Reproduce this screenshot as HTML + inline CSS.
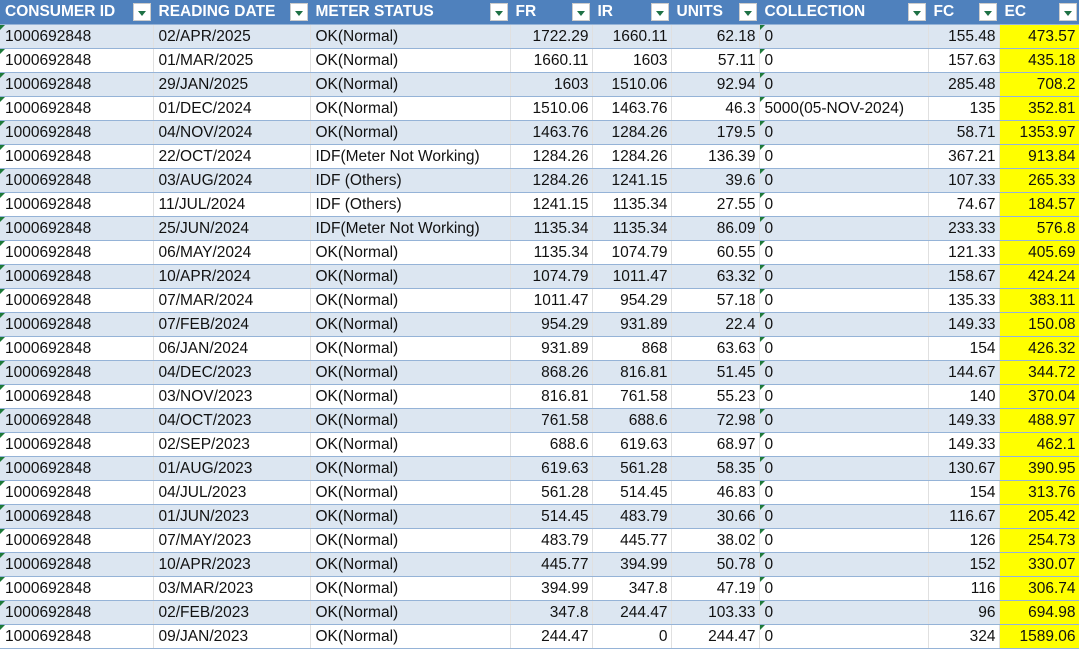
<!DOCTYPE html>
<html><head><style>
body{margin:0;width:1079px;height:650px;overflow:hidden;background:#fff;font-family:"Liberation Sans",sans-serif;}
table{border-collapse:collapse;table-layout:fixed;width:1079px;}
td,th{height:23px;padding:0 4px 0 5px;font-size:15.5px;white-space:nowrap;overflow:hidden;border-bottom:1px solid #95b3d7;border-right:1px solid #e0e0e0;position:relative;color:#111;}
td.r,td.y{padding-right:3px;}
th{height:24px;background:#4f81bd;color:#fff;text-align:left;font-weight:bold;font-size:15.5px;border-right:1px solid #4f81bd;border-bottom:1px solid #95b3d7;}
th span{position:absolute;right:2px;top:3px;width:18px;height:18px;background:#fff;border:1px solid #ccc;box-sizing:border-box;}
th span:after{content:"";position:absolute;left:4px;top:7px;border-left:4px solid transparent;border-right:4px solid transparent;border-top:5px solid #1e7145;}
tr:nth-child(even) td{background:#dce6f1;}
td.r{text-align:right;}
td.y{background:#ffff00 !important;text-align:right;}
td.t:before{content:"";position:absolute;left:0;top:0;border-top:5px solid #1e7a3a;border-right:5px solid transparent;}
</style></head><body>
<table>
<colgroup><col style="width:153px"><col style="width:157px"><col style="width:200px"><col style="width:82px"><col style="width:79px"><col style="width:88px"><col style="width:169px"><col style="width:71px"><col style="width:80px"></colgroup>
<tr><th>CONSUMER ID<span></span></th><th>READING DATE<span></span></th><th>METER STATUS<span></span></th><th>FR<span></span></th><th>IR<span></span></th><th>UNITS<span></span></th><th>COLLECTION<span></span></th><th>FC<span></span></th><th>EC<span></span></th></tr>
<tr><td class="t">1000692848</td><td>02/APR/2025</td><td>OK(Normal)</td><td class="r">1722.29</td><td class="r">1660.11</td><td class="r">62.18</td><td class="t">0</td><td class="r">155.48</td><td class="y">473.57</td></tr>
<tr><td class="t">1000692848</td><td>01/MAR/2025</td><td>OK(Normal)</td><td class="r">1660.11</td><td class="r">1603</td><td class="r">57.11</td><td class="t">0</td><td class="r">157.63</td><td class="y">435.18</td></tr>
<tr><td class="t">1000692848</td><td>29/JAN/2025</td><td>OK(Normal)</td><td class="r">1603</td><td class="r">1510.06</td><td class="r">92.94</td><td class="t">0</td><td class="r">285.48</td><td class="y">708.2</td></tr>
<tr><td class="t">1000692848</td><td>01/DEC/2024</td><td>OK(Normal)</td><td class="r">1510.06</td><td class="r">1463.76</td><td class="r">46.3</td><td class="t">5000(05-NOV-2024)</td><td class="r">135</td><td class="y">352.81</td></tr>
<tr><td class="t">1000692848</td><td>04/NOV/2024</td><td>OK(Normal)</td><td class="r">1463.76</td><td class="r">1284.26</td><td class="r">179.5</td><td class="t">0</td><td class="r">58.71</td><td class="y">1353.97</td></tr>
<tr><td class="t">1000692848</td><td>22/OCT/2024</td><td>IDF(Meter Not Working)</td><td class="r">1284.26</td><td class="r">1284.26</td><td class="r">136.39</td><td class="t">0</td><td class="r">367.21</td><td class="y">913.84</td></tr>
<tr><td class="t">1000692848</td><td>03/AUG/2024</td><td>IDF (Others)</td><td class="r">1284.26</td><td class="r">1241.15</td><td class="r">39.6</td><td class="t">0</td><td class="r">107.33</td><td class="y">265.33</td></tr>
<tr><td class="t">1000692848</td><td>11/JUL/2024</td><td>IDF (Others)</td><td class="r">1241.15</td><td class="r">1135.34</td><td class="r">27.55</td><td class="t">0</td><td class="r">74.67</td><td class="y">184.57</td></tr>
<tr><td class="t">1000692848</td><td>25/JUN/2024</td><td>IDF(Meter Not Working)</td><td class="r">1135.34</td><td class="r">1135.34</td><td class="r">86.09</td><td class="t">0</td><td class="r">233.33</td><td class="y">576.8</td></tr>
<tr><td class="t">1000692848</td><td>06/MAY/2024</td><td>OK(Normal)</td><td class="r">1135.34</td><td class="r">1074.79</td><td class="r">60.55</td><td class="t">0</td><td class="r">121.33</td><td class="y">405.69</td></tr>
<tr><td class="t">1000692848</td><td>10/APR/2024</td><td>OK(Normal)</td><td class="r">1074.79</td><td class="r">1011.47</td><td class="r">63.32</td><td class="t">0</td><td class="r">158.67</td><td class="y">424.24</td></tr>
<tr><td class="t">1000692848</td><td>07/MAR/2024</td><td>OK(Normal)</td><td class="r">1011.47</td><td class="r">954.29</td><td class="r">57.18</td><td class="t">0</td><td class="r">135.33</td><td class="y">383.11</td></tr>
<tr><td class="t">1000692848</td><td>07/FEB/2024</td><td>OK(Normal)</td><td class="r">954.29</td><td class="r">931.89</td><td class="r">22.4</td><td class="t">0</td><td class="r">149.33</td><td class="y">150.08</td></tr>
<tr><td class="t">1000692848</td><td>06/JAN/2024</td><td>OK(Normal)</td><td class="r">931.89</td><td class="r">868</td><td class="r">63.63</td><td class="t">0</td><td class="r">154</td><td class="y">426.32</td></tr>
<tr><td class="t">1000692848</td><td>04/DEC/2023</td><td>OK(Normal)</td><td class="r">868.26</td><td class="r">816.81</td><td class="r">51.45</td><td class="t">0</td><td class="r">144.67</td><td class="y">344.72</td></tr>
<tr><td class="t">1000692848</td><td>03/NOV/2023</td><td>OK(Normal)</td><td class="r">816.81</td><td class="r">761.58</td><td class="r">55.23</td><td class="t">0</td><td class="r">140</td><td class="y">370.04</td></tr>
<tr><td class="t">1000692848</td><td>04/OCT/2023</td><td>OK(Normal)</td><td class="r">761.58</td><td class="r">688.6</td><td class="r">72.98</td><td class="t">0</td><td class="r">149.33</td><td class="y">488.97</td></tr>
<tr><td class="t">1000692848</td><td>02/SEP/2023</td><td>OK(Normal)</td><td class="r">688.6</td><td class="r">619.63</td><td class="r">68.97</td><td class="t">0</td><td class="r">149.33</td><td class="y">462.1</td></tr>
<tr><td class="t">1000692848</td><td>01/AUG/2023</td><td>OK(Normal)</td><td class="r">619.63</td><td class="r">561.28</td><td class="r">58.35</td><td class="t">0</td><td class="r">130.67</td><td class="y">390.95</td></tr>
<tr><td class="t">1000692848</td><td>04/JUL/2023</td><td>OK(Normal)</td><td class="r">561.28</td><td class="r">514.45</td><td class="r">46.83</td><td class="t">0</td><td class="r">154</td><td class="y">313.76</td></tr>
<tr><td class="t">1000692848</td><td>01/JUN/2023</td><td>OK(Normal)</td><td class="r">514.45</td><td class="r">483.79</td><td class="r">30.66</td><td class="t">0</td><td class="r">116.67</td><td class="y">205.42</td></tr>
<tr><td class="t">1000692848</td><td>07/MAY/2023</td><td>OK(Normal)</td><td class="r">483.79</td><td class="r">445.77</td><td class="r">38.02</td><td class="t">0</td><td class="r">126</td><td class="y">254.73</td></tr>
<tr><td class="t">1000692848</td><td>10/APR/2023</td><td>OK(Normal)</td><td class="r">445.77</td><td class="r">394.99</td><td class="r">50.78</td><td class="t">0</td><td class="r">152</td><td class="y">330.07</td></tr>
<tr><td class="t">1000692848</td><td>03/MAR/2023</td><td>OK(Normal)</td><td class="r">394.99</td><td class="r">347.8</td><td class="r">47.19</td><td class="t">0</td><td class="r">116</td><td class="y">306.74</td></tr>
<tr><td class="t">1000692848</td><td>02/FEB/2023</td><td>OK(Normal)</td><td class="r">347.8</td><td class="r">244.47</td><td class="r">103.33</td><td class="t">0</td><td class="r">96</td><td class="y">694.98</td></tr>
<tr><td class="t">1000692848</td><td>09/JAN/2023</td><td>OK(Normal)</td><td class="r">244.47</td><td class="r">0</td><td class="r">244.47</td><td class="t">0</td><td class="r">324</td><td class="y">1589.06</td></tr>
</table>
</body></html>
